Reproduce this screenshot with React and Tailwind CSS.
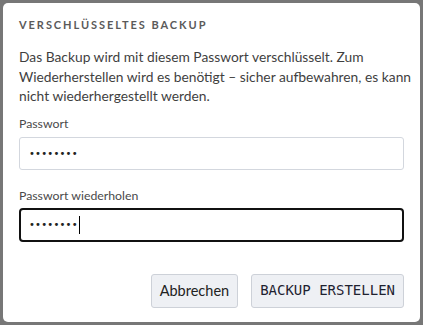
import React from 'react';

export default function App() {
  return (
    <div className="w-[423px] h-[325px] bg-[#777777] p-[3px] overflow-hidden" style={{ fontFamily: 'Lato, "Noto Sans", sans-serif' }}>
      <div className="bg-white rounded-[5px] h-[319px] w-[417px] px-4 pt-[14px] flex flex-col">
        {/* Title */}
        <h2 className="text-[11px] font-bold tracking-[1.95px] text-[#5a5a5a] uppercase leading-4">
          Verschlüsseltes Backup
        </h2>

        <p className="mt-[14px] -mr-2 text-[13.8px] leading-[19.5px] text-[#3f3f3f]">
          Das Backup wird mit diesem Passwort verschlüsselt. Zum Wiederherstellen wird es benötigt – sicher aufbewahren, es kann nicht wiederhergestellt werden.
        </p>

        {/* Password fields */}
        <label className="mt-[10px] text-[12.3px] leading-4 text-[#4a4a4a]">Passwort</label>
        <div className="mt-[5px] h-[33px] border border-[#d3d7de] rounded-[3px] flex items-center px-[9px]">
          <span className="text-[10px] tracking-[0.2px] text-[#222]" style={{ fontFamily: '"DejaVu Sans", sans-serif' }}>••••••••</span>
        </div>

        <label className="mt-[18px] text-[12.3px] leading-4 text-[#4a4a4a]">Passwort wiederholen</label>
        <div className="mt-[4px] h-[34px] border-2 border-[#111] rounded-[4px] flex items-center px-[8px]">
          <span className="text-[10px] tracking-[0.2px] text-[#222]" style={{ fontFamily: '"DejaVu Sans", sans-serif' }}>••••••••</span>
          <span className="ml-px w-px h-[18px] bg-black" />
        </div>

        {/* Actions */}
        <div className="mt-[32px] flex justify-end gap-[13px]">
          <button className="h-[34px] px-[8px] bg-[#eef0f4] border border-[#cdd1d8] rounded-[3px] text-[14.5px] text-[#222]">
            Abbrechen
          </button>
          <button className="h-[34px] px-[8px] bg-[#eef0f4] border border-[#cdd1d8] rounded-[3px] text-[14px] text-[#1e2230]" style={{ fontFamily: '"DejaVu Sans Mono", monospace' }}>
            BACKUP ERSTELLEN
          </button>
        </div>
      </div>
    </div>
  );
}
